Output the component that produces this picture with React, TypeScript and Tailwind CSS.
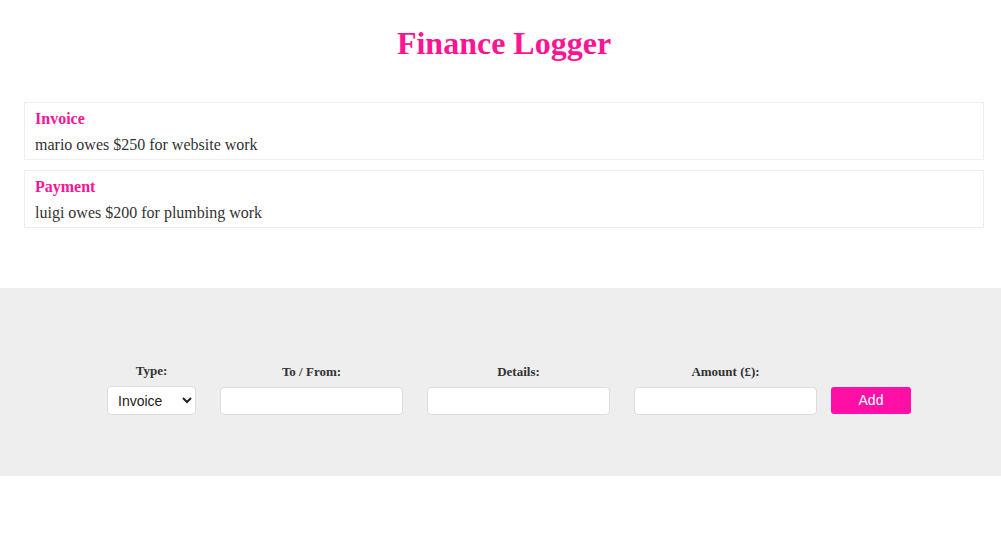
const items = [
  { type: "Invoice", text: "mario owes $250 for website work" },
  { type: "Payment", text: "luigi owes $200 for plumbing work" },
];

const serif = { fontFamily: '"Liberation Serif", "Times New Roman", serif' };

function Field({ label, children }: { label: string; children: React.ReactNode }) {
  return (
    <div className="flex flex-col items-center">
      <label className="mb-[7px] text-[13px] leading-[16px] font-bold text-[#333]">{label}</label>
      {children}
    </div>
  );
}

export default function App() {
  return (
    <div className="min-h-[552px] bg-white" style={serif}>
      <div className="ml-6 w-[960px] pt-[25px]">
        <h1 className="mb-[40px] text-center text-[32px] leading-[37px] font-bold text-[#ff1493]">
          Finance Logger
        </h1>
        <ul className="flex flex-col gap-[10px]">
          {items.map((item) => (
            <li key={item.type} className="border border-[#eee] px-[10px] pt-[7px] pb-[5px]">
              <h4 className="text-[16px] leading-[18px] font-bold text-[#ff1493]">{item.type}</h4>
              <p className="mt-[8px] text-[16px] leading-[18px] text-[#333]">{item.text}</p>
            </li>
          ))}
        </ul>
      </div>

      <footer className="mt-[60px] flex justify-center bg-[#eee] pt-[75px] pb-[61px] pl-[17px]">
        <form className="flex items-end gap-6" onSubmit={(e) => e.preventDefault()}>
          <Field label="Type:">
            <select
              defaultValue="invoice"
              className="h-[29px] w-[89px] rounded-[4px] border border-[#ddd] bg-white pl-[6px] text-[14px] text-[#222]"
              style={{ fontFamily: '"Liberation Sans", Arial, sans-serif' }}
            >
              <option value="invoice">Invoice</option>
              <option value="payment">Payment</option>
            </select>
          </Field>
          <Field label="To / From:">
            <input className="h-[28px] w-[183px] rounded-[4px] border border-[#ddd] bg-white" />
          </Field>
          <Field label="Details:">
            <input className="h-[28px] w-[183px] rounded-[4px] border border-[#ddd] bg-white" />
          </Field>
          <Field label="Amount (£):">
            <input className="h-[28px] w-[183px] rounded-[4px] border border-[#ddd] bg-white" />
          </Field>
          <button
            className="-ml-[10px] mb-[1px] h-[27px] w-[80px] rounded-[3px] bg-[#ff0fa6] text-[14px] text-white"
            style={{ fontFamily: '"Liberation Sans", Arial, sans-serif' }}
          >
            Add
          </button>
        </form>
      </footer>
    </div>
  );
}
